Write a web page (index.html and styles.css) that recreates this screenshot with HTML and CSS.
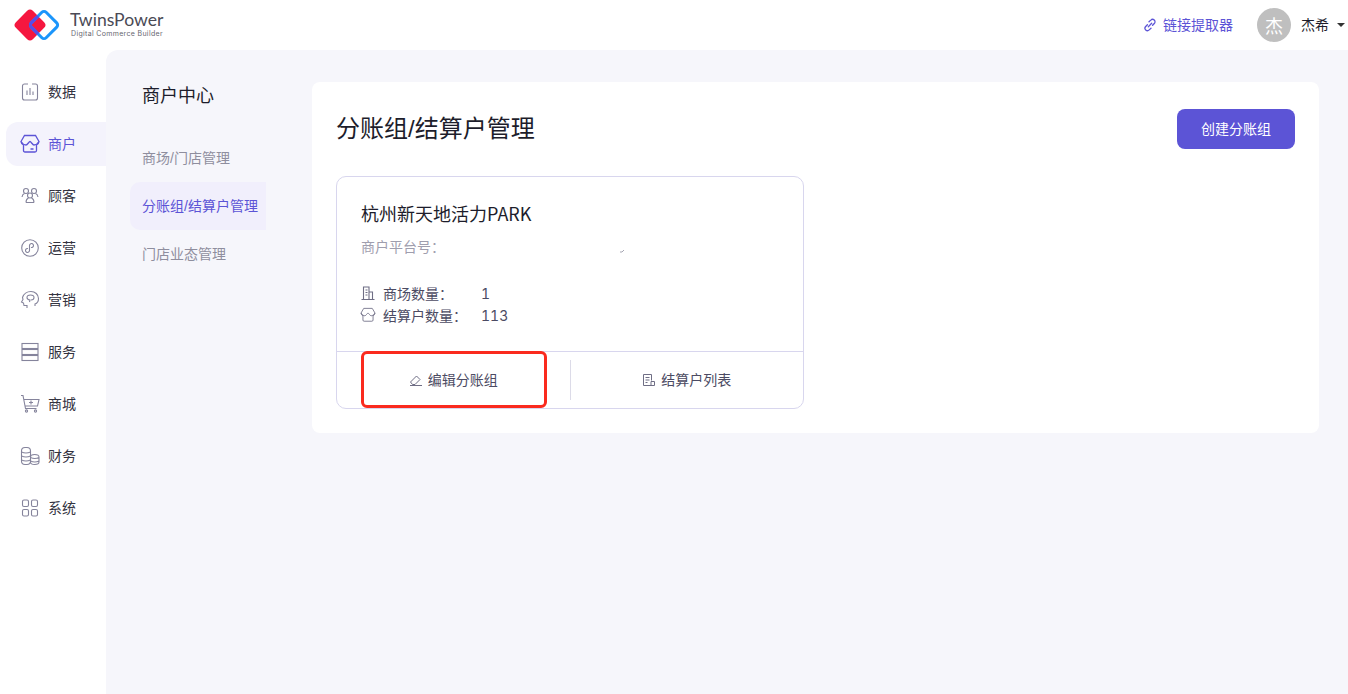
FILE: index.html
```html
<!DOCTYPE html>
<html lang="zh-CN">
<head>
    <meta charset="UTF-8">
    <title>分账组/结算户管理</title>
    <link rel="stylesheet" href="styles.css">
</head>
<body>
    <header class="topbar">
        <div class="brand">
            <svg class="brand-logo" width="48" height="34" viewBox="0 0 48 34">
                <defs>
                    <clipPath id="red-clip"><rect x="5" y="5" width="24" height="24" rx="4" transform="rotate(45 17 17)"/></clipPath>
                </defs>
                <rect x="5" y="5" width="24" height="24" rx="4" transform="rotate(45 17 17)" fill="#f5173f"/>
                <rect x="20.500" y="6.500" width="21" height="21" rx="3" transform="rotate(45 31 17)" fill="none" stroke="#1b95fb" stroke-width="3"/>
                <g clip-path="url(#red-clip)">
                    <rect x="20.500" y="6.500" width="21" height="21" rx="3" transform="rotate(45 31 17)" fill="none" stroke="#5a4be6" stroke-width="3"/>
                </g>
            </svg>
            <div class="brand-text">
                <div class="brand-name">TwinsPower</div>
                <div class="brand-sub">Digital Commerce Builder</div>
            </div>
        </div>
        <div class="topbar-right">
            <a class="tool-link" href="#">
                <svg width="14" height="14" viewBox="0 0 14 14" fill="none" stroke="#5c54d6" stroke-width="1.300" stroke-linecap="round">
                    <path d="M6 3.800 L7.800 2.100 a2.400 2.400 0 0 1 3.500 3.400 L9.600 7.300"/>
                    <path d="M8 10.200 L6.200 11.900 a2.400 2.400 0 0 1 -3.500 -3.400 L4.400 6.700"/>
                    <path d="M5.300 8.700 L8.700 5.300"/>
                </svg>
                <span class="tool-text">链接提取器</span>
            </a>
            <div class="avatar">杰</div>
            <div class="user-name">杰希</div>
            <span class="caret"></span>
        </div>
    </header>

    <div class="layout">
        <nav class="sidebar">
            <a class="nav-item" href="#">
                <svg class="nav-icon" viewBox="0 0 18 18"><path d="M7 1H3.500a2 2 0 0 0-2 2v12a2 2 0 0 0 2 2h11a2 2 0 0 0 2-2V3a2 2 0 0 0-2-2H11"/><path d="M6 7.500V12M9 5v7M12 8.500V12"/></svg>
                <span class="nav-label">数据</span>
            </a>
            <a class="nav-item active" href="#">
                <svg class="nav-icon" viewBox="0 0 18 18"><path d="M3.500 .5h11l3.500 6q-.5 3-2.500 3.500v5.500q0 1.500-1.500 1.500h-10q-1.500 0-1.500-1.500V10Q.5 9.500 0 6.500z"/><path d="M0 6.500c1.500 2.500 3.500 3.500 5 3.500s3-3.500 4-3.500 2.500 3.500 4 3.500 3.500-1 5-3.500M9.500 14h3"/></svg>
                <span class="nav-label">商户</span>
            </a>
            <a class="nav-item" href="#">
                <svg class="nav-icon" viewBox="0 0 18 18"><circle cx="5" cy="4" r="2.500"/><circle cx="13" cy="4" r="2.500"/><circle cx="9" cy="8.500" r="2.500"/><path d="M1 10q.500-3 2.500-3.500M17 10q-.500-3-2.500-3.500M5 15.500q0-3.500 2.500-4.500M13 15.500q0-3.500-2.500-4.500M5 15.500h8"/></svg>
                <span class="nav-label">顾客</span>
            </a>
            <a class="nav-item" href="#">
                <svg class="nav-icon" viewBox="0 0 18 18"><circle cx="9" cy="9" r="8.300"/><path d="M7 9.500a2 2 0 1 0 1.500 2V6.500a2 2 0 1 1 1.500 2"/></svg>
                <span class="nav-label">运营</span>
            </a>
            <a class="nav-item" href="#">
                <svg class="nav-icon" viewBox="0 0 18 18"><path d="M6 17v-2.500H3l-.5-2.500-2-1 1.500-2.500-.5-2C2.500 3 6 .5 10 .5c4 0 7.500 3 7.500 7 0 3-2 5-3.500 5.500v2"/><path d="M8.500 11l.5-2c-2-.2-3-1.300-3-2.500C6 5 7.500 4 9.500 4s3.500 1 3.500 2.500c0 1.700-1.500 2.500-3 2.500"/></svg>
                <span class="nav-label">营销</span>
            </a>
            <a class="nav-item" href="#">
                <svg class="nav-icon" viewBox="0 0 18 18"><rect x="1" y=".5" width="16" height="5"/><rect x="1" y="6.500" width="16" height="5"/><rect x="1" y="12.500" width="16" height="5"/></svg>
                <span class="nav-label">服务</span>
            </a>
            <a class="nav-item" href="#">
                <svg class="nav-icon" viewBox="0 0 18 18"><path d="M0 .5h2l2.500 13h11M2.800 4.500H18l-1.500 6.500H4M10 5.500v4M8 7.500h4"/><circle cx="5.500" cy="16" r="1.100"/><circle cx="14.500" cy="16" r="1.100"/></svg>
                <span class="nav-label">商城</span>
            </a>
            <a class="nav-item" href="#">
                <svg class="nav-icon" viewBox="0 0 18 18"><rect x=".5" y=".5" width="9" height="17" rx="3.500"/><path d="M.5 5q4.500 2 9 0M.5 9q4.500 2 9 0M.5 13q4.500 2 9 0"/><path d="M9.500 10q0-2.500 4.200-2.500T18 10v5q0 2.500-4.300 2.500T9.500 15M9.500 10.500q4.300 2 8.500 0M9.500 14q4.300 2 8.500 0"/></svg>
                <span class="nav-label">财务</span>
            </a>
            <a class="nav-item" href="#">
                <svg class="nav-icon" viewBox="0 0 18 18"><rect x="1.500" y="1" width="6" height="6.500" rx="1.500"/><rect x="10.500" y="1" width="6" height="6.500" rx="1.500"/><rect x="1.500" y="10.500" width="6" height="6.500" rx="1.500"/><rect x="10.500" y="10.500" width="6" height="6.500" rx="1.500"/></svg>
                <span class="nav-label">系统</span>
            </a>
        </nav>

        <main class="main">
            <aside class="subnav">
                <h2 class="subnav-title">商户中心</h2>
                <a class="subnav-item" href="#">商场/门店管理</a>
                <a class="subnav-item active" href="#">分账组/结算户管理</a>
                <a class="subnav-item" href="#">门店业态管理</a>
            </aside>

            <section class="panel">
                <div class="panel-head">
                    <h1>分账组/结算户管理</h1>
                    <button class="create-button"><span class="create-text">创建分账组</span></button>
                </div>

                <div class="group-card">
                    <div class="group-body">
                        <div class="group-name">杭州新天地活力PARK</div>
                        <div class="group-platform">
                            <span>商户平台号：</span>
                            <svg class="redact-mark" width="6" height="4" viewBox="0 0 6 4"><path d="M1 3h2l2-2" fill="none" stroke="#a5a5b2" stroke-width="1"/></svg>
                        </div>
                        <div class="stat-row">
                            <svg class="stat-icon" viewBox="0 0 14 14"><path d="M.5 13.500h13M2.500 13V1h5.500v12M8 6h3.500v7M4.500 4h2M4.500 6.500h2M4.500 9h2"/></svg>
                            <span class="stat-label">商场数量：</span>
                            <span class="stat-value">1</span>
                        </div>
                        <div class="stat-row">
                            <svg class="stat-icon" viewBox="0 0 18 18"><path d="M3.500 .5h11l3.500 6q-.5 3-2.500 3.500v5.500q0 1.500-1.500 1.500h-10q-1.500 0-1.500-1.500V10Q.5 9.500 0 6.500z"/><path d="M0 6.500c1.500 2.500 3.500 3.500 5 3.500s3-3.500 4-3.500 2.500 3.500 4 3.500 3.500-1 5-3.500"/></svg>
                            <span class="stat-label">结算户数量：</span>
                            <span class="stat-value">113</span>
                        </div>
                    </div>
                    <div class="group-actions">
                        <a class="group-action" href="#">
                            <svg class="action-icon" viewBox="0 0 14 14"><path d="M1.500 9L7.500 3l3.500 3.500L6 11.500H3.500zM1 12.500h12"/></svg>
                            <span class="action-text">编辑分账组</span>
                        </a>
                        <span class="action-divider"></span>
                        <a class="group-action" href="#">
                            <svg class="action-icon" viewBox="0 0 14 14"><path d="M9.500 7.500V1.500h-8v11h11V8.500h-3.500v4M3.500 4.500h4M3.500 7h4M3.500 9.500h2"/></svg>
                            <span class="action-text">结算户列表</span>
                        </a>
                        <div class="highlight-box"></div>
                    </div>
                </div>
            </section>
        </main>
    </div>
</body>
</html>
```

FILE: styles.css
```css
* {
    box-sizing: border-box;
}
html, body {
    height: 100%;
}
body {
    margin: 0;
    font-family: Inter, "Noto Sans CJK SC", sans-serif;
    background-color: #fff;
    color: #1d1d2b;
    overflow: hidden;
}
a {
    text-decoration: none;
    color: inherit;
}
.topbar {
    height: 50px;
    display: flex;
    align-items: center;
    justify-content: space-between;
    padding-left: 13px;
    padding-right: 3px;
}
.brand {
    display: flex;
    align-items: center;
}
.brand-text {
    margin-left: 9px;
    padding-bottom: 2px;
    color: #4a4a55;
}
.brand-name {
    font-family: Lato, sans-serif;
    font-size: 17.6px;
    line-height: 19px;
}
.brand-sub {
    margin-left: 1px;
    font-size: 7px;
    line-height: 9px;
    letter-spacing: 0.33px;
    color: #66666f;
}
.topbar-right {
    display: flex;
    align-items: center;
    font-size: 14px;
}
.tool-link {
    display: flex;
    align-items: center;
    gap: 6px;
    color: #5c54d6;
    margin-right: 24px;
}
.tool-text {
    padding-bottom: 2px;
}
.avatar {
    width: 34px;
    height: 34px;
    border-radius: 50%;
    background-color: #bfbfbf;
    color: #fff;
    font-size: 18px;
    display: flex;
    align-items: center;
    justify-content: center;
}
.user-name {
    margin-left: 10px;
    padding-bottom: 2px;
}
.caret {
    width: 0;
    height: 0;
    border-left: 4px solid transparent;
    border-right: 4px solid transparent;
    border-top: 4px solid #333;
    margin-left: 8px;
}
.layout {
    display: flex;
    height: 644px;
}
.sidebar {
    width: 106px;
    padding-top: 20px;
    padding-left: 6px;
    flex-shrink: 0;
}
.nav-item {
    height: 44px;
    margin-bottom: 8px;
    padding-left: 15px;
    display: flex;
    align-items: center;
    gap: 9px;
    font-size: 14px;
    color: #33333f;
}
.nav-label {
    padding-bottom: 2px;
}
.nav-item.active {
    background-color: #f4f3fc;
    border-radius: 12px 0 0 12px;
    color: #5c54d6;
}
.nav-icon {
    width: 18px;
    height: 18px;
    overflow: visible;
    fill: none;
    stroke: #85849c;
    stroke-width: 1.100;
}
.nav-item.active .nav-icon {
    stroke: #5c54d6;
    stroke-width: 1.300;
}
.main {
    flex: 1;
    display: flex;
    align-items: flex-start;
    background-color: #f6f6fb;
    border-top-left-radius: 12px;
    padding: 32px 29px 0 24px;
    min-width: 0;
}
.subnav {
    width: 136px;
    margin-right: 46px;
    flex-shrink: 0;
}
.subnav-title {
    margin: 1px 0 25px 12px;
    font-size: 18px;
    font-weight: 400;
    line-height: 26px;
}
.subnav-item {
    display: block;
    height: 48px;
    line-height: 48px;
    padding-left: 12px;
    font-family: "Liberation Sans", "Noto Sans CJK SC", sans-serif;
    font-size: 14px;
    color: #8f8e9e;
    white-space: nowrap;
}
.subnav-item.active {
    background-color: #f1effc;
    border-radius: 10px 0 0 10px;
    color: #5c54d6;
}
.panel {
    flex: 1;
    height: 351px;
    background-color: #fff;
    border-radius: 8px;
    padding: 27px 24px 24px;
}
.panel-head {
    display: flex;
    align-items: center;
    justify-content: space-between;
    margin-bottom: 27px;
}
.panel-head h1 {
    margin: 0;
    font-family: "Liberation Sans", "Noto Sans CJK SC", sans-serif;
    font-size: 24px;
    font-weight: 400;
    line-height: 40px;
}
.create-button {
    width: 118px;
    height: 40px;
    border: none;
    border-radius: 8px;
    background-color: #5c54d6;
    color: #fff;
    font-family: inherit;
    font-size: 14px;
}
.create-text {
    display: block;
    padding-bottom: 2px;
}
.group-card {
    width: 468px;
    height: 233px;
    border: 1px solid #d8d6ee;
    border-radius: 10px;
    display: flex;
    flex-direction: column;
}
.group-body {
    height: 175px;
    padding: 22px 24px 0;
    border-bottom: 1px solid #d8d6ee;
}
.group-name {
    font-family: "Noto Sans CJK SC", sans-serif;
    font-size: 18px;
    line-height: 28px;
}
.group-platform {
    display: flex;
    font-size: 14px;
    line-height: 20px;
    color: #9f9eae;
    margin-top: 10px;
    margin-bottom: 25px;
    position: relative;
}
.redact-mark {
    position: absolute;
    left: 258px;
    top: 12px;
}
.stat-row {
    display: flex;
    align-items: center;
    height: 22px;
    font-size: 14px;
    color: #4c4b63;
}
.stat-icon {
    width: 14px;
    height: 14px;
    overflow: visible;
    fill: none;
    stroke: #6f6e85;
    stroke-width: 1.100;
    margin-right: 8px;
}
.stat-label {
    width: 98px;
}
.stat-value {
    font-variant-numeric: tabular-nums;
}
.group-actions {
    flex: 1;
    display: flex;
    align-items: center;
    position: relative;
}
.group-action {
    flex: 1;
    display: flex;
    align-items: center;
    justify-content: center;
    gap: 5px;
    font-size: 14px;
    color: #4c4b63;
}
.action-text {
    padding-bottom: 2px;
}
.action-icon {
    width: 14px;
    height: 14px;
    fill: none;
    stroke: #6f6e85;
    stroke-width: 1;
}
.action-divider {
    width: 1px;
    height: 40px;
    background-color: #dcdbe8;
}
.highlight-box {
    position: absolute;
    left: 24px;
    top: -1px;
    width: 186px;
    height: 57px;
    border: 3px solid #fa2a1e;
    border-radius: 6px;
}
```
